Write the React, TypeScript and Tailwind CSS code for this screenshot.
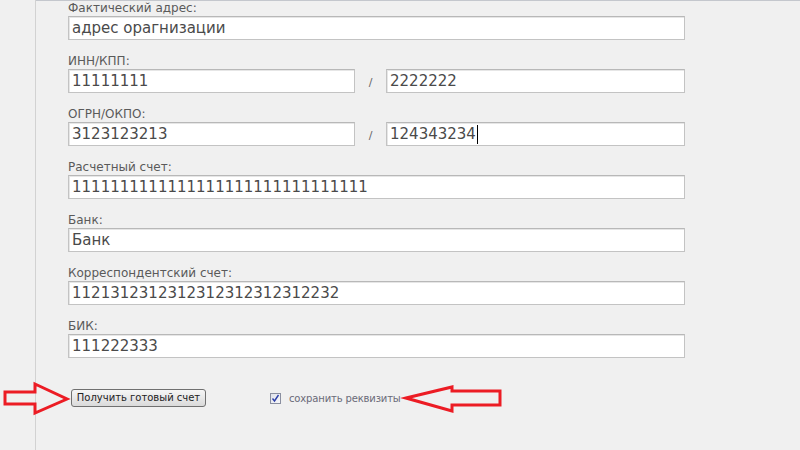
const rows = [
  { label: 'Фактический адрес:', value: 'адрес орагнизации' },
  { label: 'ИНН/КПП:', value: '11111111', second: '2222222' },
  { label: 'ОГРН/ОКПО:', value: '3123123213', second: '124343234', caret: true },
  { label: 'Расчетный счет:', value: '1111111111111111111111111111111' },
  { label: 'Банк:', value: 'Банк' },
  { label: 'Корреспондентский счет:', value: '1121312312312312312312312232' },
  { label: 'БИК:', value: '111222333' },
];

type FieldProps = { value: string; width: string; caret?: boolean };

const Field = ({ value, width, caret }: FieldProps) => (
  <div
    className={`${width} h-[24px] flex items-center bg-white border border-[#c3c3c3] border-t-[#b8b8b8] shadow-[inset_1px_1px_0_#e6e6e6] px-[3px] text-[15px] text-[#4a4a4a] leading-none whitespace-nowrap overflow-hidden`}
  >
    <span>{value}</span>
    {caret && <span className="inline-block w-px h-[19px] bg-black ml-[1px]" />}
  </div>
);

const App = () => {
  return (
    <div
      className="relative w-[800px] h-[450px] bg-[#f0f0f0] overflow-hidden flex"
      style={{ fontFamily: '"DejaVu Sans", Verdana, sans-serif' }}
    >
      <div className="w-[35px] shrink-0" />
      <div className="flex-1 border-l border-[#d2d2d2] shadow-[inset_0_1px_0_#c4c7cd] pl-[32px]">
        <div className="flex flex-col">
          {rows.map((row, i) => (
            <div key={i} className={i === 0 ? 'flex flex-col' : 'flex flex-col mt-[13px]'}>
              <div className="h-[16px] text-[12px] leading-[16px] text-[#5a5a5a]">{row.label}</div>
              {row.second ? (
                <div className="flex items-center">
                  <Field value={row.value} width="w-[287px]" />
                  <span className="w-[31px] text-center text-[11px] text-[#666] mt-[4px]">/</span>
                  <Field value={row.second} width="w-[299px]" caret={row.caret} />
                </div>
              ) : (
                <Field value={row.value} width="w-[617px]" />
              )}
            </div>
          ))}
        </div>
        <div className="flex items-center mt-[31px] h-[18px]">
          <button
            type="button"
            className="ml-[3px] w-[135px] h-[18px] rounded-[3px] border border-[#707070] bg-gradient-to-b from-[#f6f6f6] to-[#dadada] text-[10px] text-[#222] leading-none"
          >
            Получить готовый счет
          </button>
          <div className="ml-[64px] w-[11px] h-[11px] border border-[#8a8fa0] bg-gradient-to-br from-[#dfe2ea] to-[#f7f7f9] flex items-center justify-center">
            <svg width="9" height="9" viewBox="0 0 9 9">
              <path d="M1.5 4.5 L3.5 7 L7.5 1" fill="none" stroke="#2c3fa8" strokeWidth="1.4" />
            </svg>
          </div>
          <span className="ml-[8px] text-[10px] tracking-[-0.15px] text-[#6a6a78]">сохранить реквизиты</span>
        </div>
      </div>

      {/* стрелки-аннотации поверх формы */}
      <svg className="absolute left-0 top-[378px]" width="80" height="40" viewBox="0 378 80 40">
        <path
          d="M5 392 L35 392 L35 384 L67 399 L35 413 L35 404 L5 404 Z"
          fill="none"
          stroke="#ec1c24"
          strokeWidth="3"
          strokeLinejoin="miter"
        />
      </svg>
      <svg className="absolute left-[400px] top-[380px]" width="110" height="40" viewBox="400 380 110 40">
        <path
          d="M406 398 L452 387 L452 391 L500 391 L500 405 L452 405 L452 411 Z"
          fill="none"
          stroke="#ec1c24"
          strokeWidth="3"
          strokeLinejoin="miter"
        />
      </svg>
    </div>
  );
};

export default App;
